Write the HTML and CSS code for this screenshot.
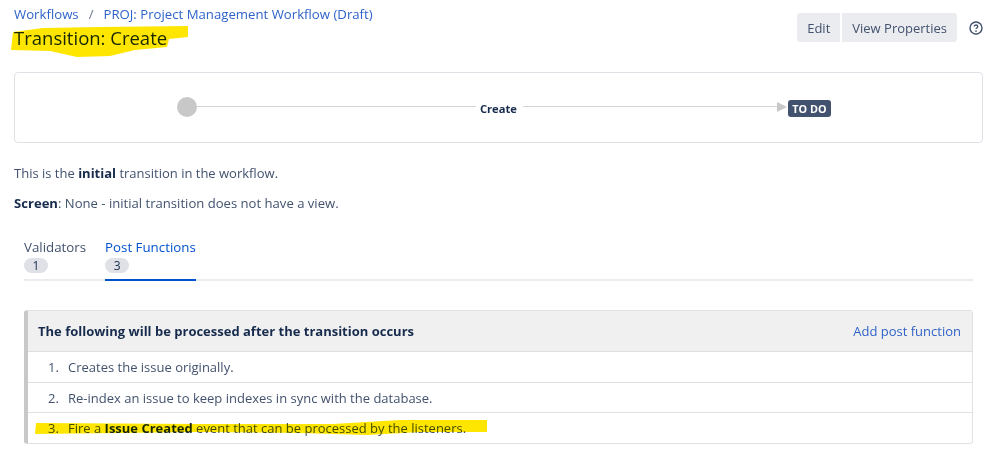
FILE: index.html
```html
<!DOCTYPE html>
<html lang="en">
<head>
<meta charset="utf-8">
<title>Transition: Create</title>
<link rel="stylesheet" href="styles.css">
</head>
<body>
<div class="page">
  <header class="top">
    <div class="titles">
      <nav class="crumbs"><a>Workflows</a><span class="sep">/</span><a>PROJ: Project Management Workflow (Draft)</a></nav>
      <h1>Transition: Create</h1>
    </div>
    <div class="actions">
      <button class="btn">Edit</button>
      <button class="btn">View Properties</button>
      <svg class="help" width="14" height="14" viewBox="0 0 14 14"><circle cx="7" cy="7" r="6" fill="none" stroke="#42526e" stroke-width="1.4"/><path d="M5.2 5.6c0-1 .8-1.6 1.8-1.6s1.8.6 1.8 1.5c0 1.3-1.8 1.3-1.8 2.6" fill="none" stroke="#42526e" stroke-width="1.3"/><circle cx="7" cy="10.1" r=".85" fill="#42526e"/></svg>
    </div>
  </header>
  <section class="diagram">
    <span class="dot"></span>
    <span class="line short"></span>
    <span class="trans">Create</span>
    <span class="line long"></span>
    <span class="arrow"></span>
    <span class="lozenge">TO DO</span>
  </section>
  <p class="p1">This is the <b>initial</b> transition in the workflow.</p>
  <p class="p2"><b>Screen</b>: None - initial transition does not have a view.</p>
  <div class="tabs">
    <div class="tab"><span class="tab-name">Validators</span><span class="badge">1</span></div>
    <div class="tab active"><span class="tab-name">Post Functions</span><span class="badge">3</span></div>
  </div>
  <section class="panel">
    <div class="panel-head"><strong>The following will be processed after the transition occurs</strong><a>Add post function</a></div>
    <ol class="items">
      <li>Creates the issue originally.</li>
      <li>Re-index an issue to keep indexes in sync with the database.</li>
      <li>Fire a <b>Issue Created</b> event that can be processed by the listeners.</li>
    </ol>
  </section>
</div>
<svg class="marker" width="998" height="466" viewBox="0 0 998 466">
  <path d="M13 32 L43 28 L100 27 L188 26 L188 37 L169 39 L167 47 L135 50 L110 56 L77 57 L50 51 L11 50 Z" fill="#ffe600"/>
  <path d="M36 423 L200 424 L333 424 L400 420 L487 420 L487 432 L420 432 L367 435 L300 433 L200 432 L35 434 Z" fill="#ffe600"/>
</svg>
</body>
</html>
```
FILE: styles.css
```css
* { box-sizing: border-box; }
html, body { margin: 0; padding: 0; background: #fff; }
body {
  position: relative;
  width: 998px;
  height: 466px;
  overflow: hidden;
  font-family: "Open Sans", "Noto Sans", sans-serif;
  font-size: 13px;
  color: #42526e;
}
.page { padding: 5px 15px 0 14px; }
.top { display: flex; justify-content: space-between; align-items: flex-start; }
.crumbs { color: #6b778c; line-height: 18px; display: flex; font-size: 13.2px; }
.crumbs a { color: #2f63c9; }
.sep { margin: 0 10px; }
h1 { margin: 2px 0 0; font-size: 18.5px; line-height: 26px; font-weight: 500; color: #172b4d; }
.actions { display: flex; align-items: center; margin-top: 8px; }
.btn {
  height: 29px;
  border: 0;
  margin: 0 0 0 2px;
  background: #ebecf0;
  color: #42526e;
  font: inherit;
  padding: 0 10px;
  border-radius: 0;
}
.btn:first-child { border-radius: 3px 0 0 3px; }
.btn:nth-child(2) { border-radius: 0 3px 3px 0; }
.help { margin-left: 12px; }
.diagram {
  margin-top: 21px;
  height: 71px;
  border: 1px solid #dfe1e6;
  border-radius: 4px;
  display: flex;
  align-items: center;
  padding: 0 151px 0 162px;
}
.dot { width: 20px; height: 20px; border-radius: 50%; background: #c8c8c8; flex: none; margin-top: -2px; }
.line { height: 1px; background: #d4d4d4; margin-top: -2px; }
.line.short { width: 280px; }
.line.long { width: 255px; }
.trans { font-weight: 700; font-size: 11.2px; color: #172b4d; padding: 0 0 0 4px; width: 47px; text-align: left; margin-top: 2px; }
.arrow { width: 0; height: 0; border-left: 10px solid #c8c8c8; border-top: 5px solid transparent; border-bottom: 5px solid transparent; flex: none; margin-top: -2px; }
.lozenge {
  margin-left: 1px;
  background: #42526e;
  color: #fff;
  font-size: 10.8px;
  font-weight: 700;
  line-height: 17px;
  height: 17px;
  padding: 0 4.5px;
  border-radius: 3px;
  flex: none;
  margin-top: 1px;
}
p { margin: 0; line-height: 20px; }
.p1 { margin-top: 20px; }
.p2 { margin-top: 10px; font-size: 13.1px; }
b, strong { color: #172b4d; font-weight: 700; }
.tabs {
  margin: 23px 10px 0 10px;
  display: flex;
  gap: 19px;
  height: 45px;
  border-bottom: 2px solid #ebecf0;
}
.tab { display: flex; flex-direction: column; align-items: flex-start; height: 45px; }
.tab-name { line-height: 18px; margin-top: 2px; font-size: 13.3px; font-weight: 500; }
.tab.active { border-bottom: 2px solid #0052cc; }
.tab.active .tab-name { color: #0052cc; }
.badge {
  margin-top: 2px;
  width: 24px;
  height: 15px;
  border-radius: 8px;
  background: #dfe1e6;
  font-size: 12px;
  line-height: 15px;
  text-align: center;
  color: #172b4d;
}
.panel {
  margin: 29px 10px 0;
  border: 1px solid #dfe1e6;
  border-left: 4px solid #c8c8c8;
  border-radius: 3px;
  height: 134px;
}
.panel-head {
  height: 41px;
  background: #f0f0f0;
  border-bottom: 1px solid #dfdfdf;
  display: flex;
  justify-content: space-between;
  align-items: center;
  padding: 0 11px 0 10px;
}
.panel-head a { color: #2f63c9; }
.items { margin: 0; padding: 0; list-style: none; counter-reset: n; }
.items li {
  counter-increment: n;
  height: 30.5px;
  line-height: 30px;
  padding-left: 40px;
  border-bottom: 1px solid #dfdfdf;
  position: relative;
}
.items li:last-child { border-bottom: 0; }
.items li::before {
  content: counter(n) ".";
  position: absolute;
  left: 20px;
}
.marker { position: absolute; left: 0; top: 0; mix-blend-mode: multiply; pointer-events: none; }
```
